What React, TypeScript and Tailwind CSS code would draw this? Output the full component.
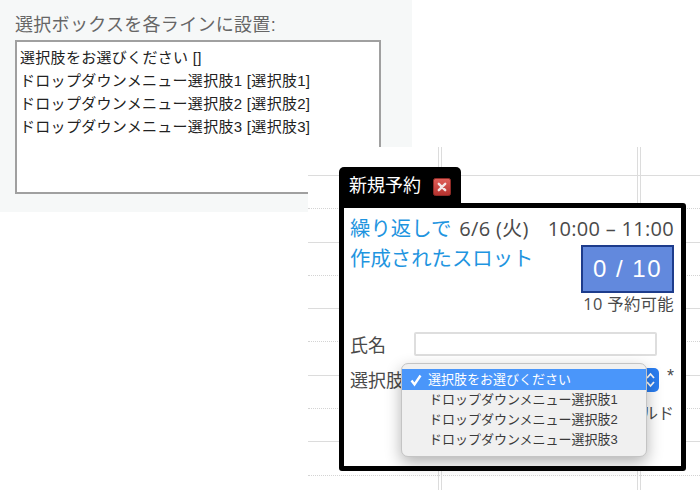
const jp = "font-['Liberation_Sans','Noto_Sans_CJK_JP',sans-serif]";
const wide = "font-['Open_Sans','Noto_Sans_CJK_JP',sans-serif]";

const rows = [
  "border-[#dcdcdc] border-solid",
  "border-[#d4d4d4] border-dotted",
  "border-[#dcdcdc] border-solid",
  "border-[#d4d4d4] border-dotted",
  "border-[#dcdcdc] border-solid",
  "border-[#d4d4d4] border-dotted",
  "border-[#dcdcdc] border-solid",
  "border-[#d4d4d4] border-dotted",
  "border-[#dcdcdc] border-solid",
  "border-[#d4d4d4] border-dotted",
];

function Calendar() {
  return (
    <div className="absolute left-[308px] top-[147px] right-0 bottom-0 bg-white overflow-hidden">
      <div className="h-[29px] border-b border-[#dcdcdc]" />
      {rows.slice(1).map((c, i) => (
        <div key={i} className={`h-[33.3px] border-b ${c}`} />
      ))}
      <div className="absolute left-[130px] top-0 bottom-0 w-[4px] border-x border-[#dcdcdc]" />
      <div className="absolute left-[329px] top-0 bottom-0 w-[4px] border-x border-[#dcdcdc]" />
    </div>
  );
}

function CloseIcon() {
  return (
    <svg width="18" height="18" viewBox="0 0 18 18" className="ml-[12px] mt-[2px]">
      <defs>
        <linearGradient id="r" x1="0" y1="0" x2="0" y2="1">
          <stop offset="0" stopColor="#e0605a" />
          <stop offset="1" stopColor="#b5322e" />
        </linearGradient>
      </defs>
      <rect x="0.5" y="0.5" width="17" height="17" rx="2" fill="url(#r)" stroke="#8f2a26" />
      <path d="M5.8 5.8 L12.2 12.2 M12.2 5.8 L5.8 12.2" stroke="#f4e6e6" strokeWidth="2.4" strokeLinecap="round" />
    </svg>
  );
}

function Menu() {
  const items = [
    "ドロップダウンメニュー選択肢1",
    "ドロップダウンメニュー選択肢2",
    "ドロップダウンメニュー選択肢3",
  ];
  return (
    <div className="absolute left-[57px] top-[155px] w-[246px] h-[94px] rounded-[7px] bg-[#f0f0f0] border border-[#c4c4c4] shadow-[0_6px_16px_rgba(0,0,0,0.3)] pt-[5px] text-[13px] leading-[20px] text-[#3a3a3a]">
      <div className="h-[21px] bg-[#4a96fa] text-white flex items-center">
        <svg width="14" height="14" viewBox="0 0 14 14" className="ml-[7px] mr-[5px]">
          <path d="M2.5 7.5 L5.5 11.5 L11.5 2.5" fill="none" stroke="#fff" strokeWidth="2.4" />
        </svg>
        選択肢をお選びください
      </div>
      {items.map((t) => (
        <div key={t} className="h-[20px] pl-[27px] whitespace-nowrap">{t}</div>
      ))}
    </div>
  );
}

function Popup() {
  return (
    <div className={`absolute left-[339px] top-[167px] w-[347px] flex flex-col ${jp} text-[#4a4a4a]`}>
      <div className="w-[122px] h-[40px] -mb-[4px] bg-black rounded-t-[5px] flex items-center pl-[10px] pb-[3px] text-white text-[18px] leading-none">
        <span className="whitespace-nowrap">新規予約</span>
        <CloseIcon />
      </div>
      <div className="relative h-[268px] bg-white border-[5px] border-black rounded-[3px] rounded-tl-none pl-[6px] pr-[7px] pt-[6px]">
        <div className="flex justify-between items-start">
          <div className="text-[#1f95e0] text-[20.4px] leading-[30px] whitespace-nowrap">
            <div className="flex items-center">
              繰り返しで
              <span className={`${wide} text-[#4a4a4a] text-[20px] ml-[8px] tracking-[0.3px]`}>6/6 (火)</span>
            </div>
            <div>作成されたスロット</div>
          </div>
          <div className="flex flex-col items-end">
            <div className={`${wide} text-[20px] leading-[29px] tracking-[0.3px] whitespace-nowrap`}>10:00 – 11:00</div>
            <div className="mt-[2px] w-[93px] h-[48px] bg-[#6289dd] border-2 border-[#1d3c8c] text-white text-[24px] tracking-[1.5px] flex items-center justify-center">
              0 / 10
            </div>
            <div className={`${wide} text-[16.4px] tracking-[0.3px] leading-[20px] mt-[1px] whitespace-nowrap`}>10 予約可能</div>
          </div>
        </div>
        <div className="flex items-center mt-[18px]">
          <span className="w-[64px] text-[18px] leading-[24px] translate-y-[2px]">氏名</span>
          <div className="w-[243px] h-[24px] border-2 border-[#dedede] rounded-[2px]" />
        </div>
        <div className="flex items-center mt-[12px]">
          <span className="w-[51px] text-[18px] leading-[24px] whitespace-nowrap translate-y-[1px]">選択肢</span>
          <div className="ml-[8px] w-[250px] h-[24px] rounded-[5px] bg-[#2a7df0] flex justify-end items-center pr-[3px]">
            <svg width="11" height="18" viewBox="0 0 11 18">
              <path d="M2 7 L5.5 3 L9 7 M2 11 L5.5 15 L9 11" fill="none" stroke="#fff" strokeWidth="1.8" />
            </svg>
          </div>
          <span className="ml-[8px] -mt-[8px] text-[18px] leading-none">*</span>
        </div>
        <div className="text-right text-[16px] leading-[20px] mt-[12px] whitespace-nowrap">必須フィールド</div>
        <div className="absolute left-[115px] top-[237px] w-[69px] h-[10px] rounded-b-[4px] border border-[#bbb] bg-[#eee]" />
        <Menu />
      </div>
    </div>
  );
}

export default function App() {
  return (
    <div className={`relative w-[700px] h-[490px] bg-white overflow-hidden ${jp}`}>
      <div className="w-[412px] h-[212px] bg-[#f6f8f8] pt-[12px] pl-[15px]">
        <div className="text-[18px] leading-[26px] tracking-[0.3px] text-[#666] whitespace-nowrap">選択ボックスを各ラインに設置:</div>
        <div className="mt-[2px] w-[366px] h-[154px] bg-white border-2 border-[#a0a0a0] pl-[3px] pt-[4px] text-[15px] leading-[23px] tracking-[0.3px] text-[#222] whitespace-nowrap">
          <div>選択肢をお選びください []</div>
          <div>ドロップダウンメニュー選択肢1 [選択肢1]</div>
          <div>ドロップダウンメニュー選択肢2 [選択肢2]</div>
          <div>ドロップダウンメニュー選択肢3 [選択肢3]</div>
        </div>
      </div>
      <Calendar />
      <Popup />
    </div>
  );
}
